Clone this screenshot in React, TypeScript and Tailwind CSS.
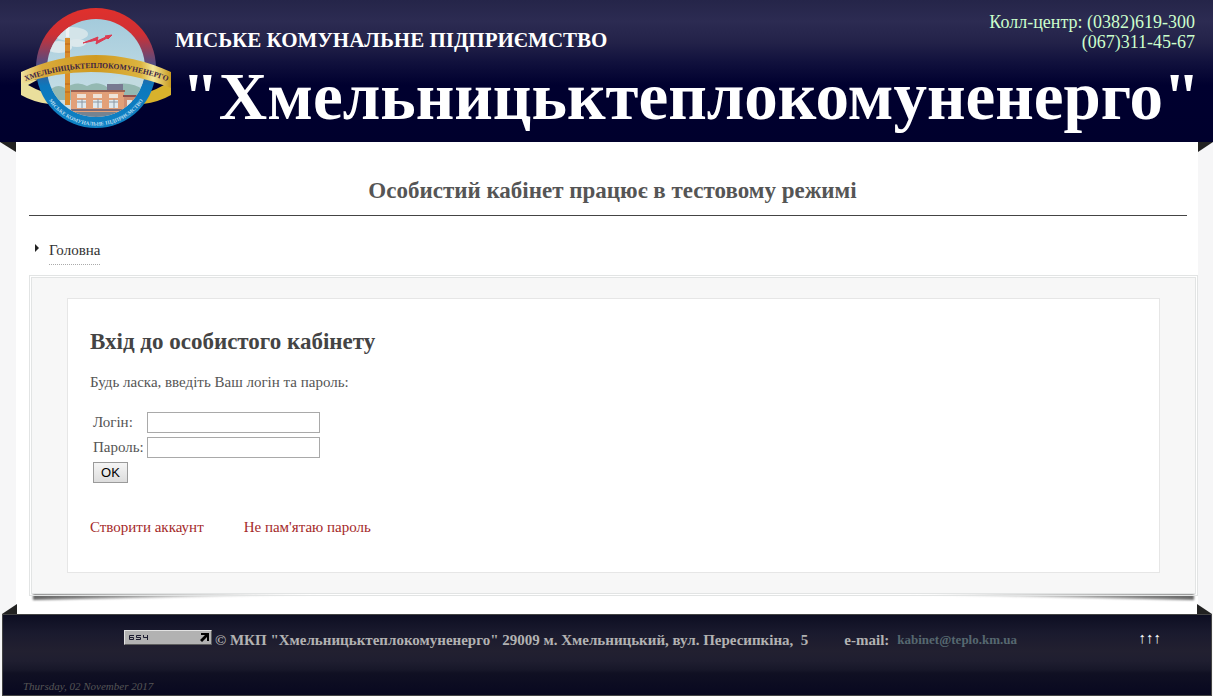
function Logo() {
  return (
    <svg viewBox="0 0 150 121" className="h-[121px] w-[150px] shrink-0" role="img" aria-label="Хмельницьктеплокомуненерго">
      <defs>
        <linearGradient id="ring" x1="0" y1="0" x2="0" y2="1">
          <stop offset="0" stopColor="#e0302c" />
          <stop offset="0.22" stopColor="#cf3034" />
          <stop offset="0.45" stopColor="#5b4a7c" />
          <stop offset="0.65" stopColor="#0c78bd" />
          <stop offset="1" stopColor="#0f82c4" />
        </linearGradient>
        <linearGradient id="sky" x1="0" y1="0" x2="0" y2="1">
          <stop offset="0" stopColor="#a4cbdc" />
          <stop offset="1" stopColor="#cfe3e8" />
        </linearGradient>
        <linearGradient id="band" x1="0" y1="0" x2="1" y2="0">
          <stop offset="0" stopColor="#f0e3a0" />
          <stop offset="0.14" stopColor="#d9a93a" />
          <stop offset="0.5" stopColor="#d09a20" />
          <stop offset="0.8" stopColor="#dcb440" />
          <stop offset="0.88" stopColor="#f3e79a" />
          <stop offset="1" stopColor="#c99a1f" />
        </linearGradient>
        <clipPath id="inner">
          <circle cx="75" cy="60" r="49" />
        </clipPath>
      </defs>
      <path d="M0 74 L0 87 Q12 94 28 96 L22 84 Q14 81 7 77 L18 71 Z" fill="#eadf9c" />
      <path d="M150 76 L150 87 Q138 94 122 96 L128 84 Q136 81 143 77 L132 71 Z" fill="#d8b22c" />
      <circle cx="75" cy="60" r="60" fill="url(#ring)" />
      <circle cx="75" cy="60" r="49" fill="url(#sky)" />
      <g clipPath="url(#inner)">
        <ellipse cx="50" cy="26" rx="17" ry="7" fill="#d3e4e9" />
        <ellipse cx="38" cy="39" rx="13" ry="6" fill="#dbe8ec" />
        <ellipse cx="56" cy="35" rx="9" ry="4" fill="#dbe8ec" />
        <ellipse cx="106" cy="74" rx="19" ry="6" fill="#c2dbe0" />
        <path d="M26 86 Q34 74 44 80 Q56 72 66 78 Q76 72 86 79 Q108 70 126 84 L126 92 L26 92 Z" fill="#94b9b2" />
        <rect x="86" y="76" width="16" height="6" fill="#787a91" />
        <rect x="50" y="84" width="53" height="22" fill="#e2a078" />
        <rect x="50" y="82" width="54" height="2" fill="#9a6152" />
        <rect x="103" y="88" width="16" height="17" fill="#cf8d70" />
        <rect x="102" y="87" width="18" height="2" fill="#904f4b" />
        {[56, 72, 88].map((x) => (
          <g key={x}>
            <rect x={x} y="86" width="9" height="4" fill="#efe4d8" />
            <rect x={x} y="92" width="9" height="8" fill="#dfe9ee" />
            <path d={`M${x} 94 H${x + 9} M${x + 5} 91 V100`} stroke="#8a98a4" strokeWidth="1" />
          </g>
        ))}
        <rect x="106" y="92" width="5" height="7" fill="#dfe3e5" />
        <rect x="20" y="104" width="110" height="10" fill="#758391" />
        <path d="M50 102 H118" stroke="#7b6c78" strokeWidth="2" />
        <rect x="44" y="30" width="5" height="67" fill="#d98c2b" />
        <path d="M44 36 h5 M44 44 h5 M44 76 h5 M44 84 h5" stroke="#b9631e" strokeWidth="1" />
        <path d="M45 29 Q44 18 48 11 Q49 20 48 29 Z" fill="#eef2f4" />
      </g>
      <path d="M62 35 L77 29 L76 33 L85 29 L84 28 L91 27 L87 31 L86 30 L75 36 L76 32 Z" fill="#dc3b52" stroke="#dc3b52" strokeWidth="1" />
      <path d="M0 64 Q75 30 150 64 L150 80 Q75 50 0 76 Z" fill="url(#band)" />
      <path id="bandText" d="M2 74 Q75 46 149 74" fill="none" />
      <text className="[font-family:'Liberation_Serif',serif] font-bold" fontSize="7.6" fill="#3b2345" textAnchor="middle">
        <textPath href="#bandText" startOffset="50%">
          ХМЕЛЬНИЦЬКТЕПЛОКОМУНЕНЕРГО
        </textPath>
      </text>
      <path id="ringText" d="M23 84 A57 57 0 0 0 127 84" fill="none" />
      <text className="[font-family:'Liberation_Serif',serif] font-bold" fontSize="5.4" fill="#b9dcf0" textAnchor="middle">
        <textPath href="#ringText" startOffset="50%">
          МІСЬКЕ КОМУНАЛЬНЕ ПІДПРИЄМСТВО
        </textPath>
      </text>
    </svg>
  );
}

function Counter() {
  return (
    <svg viewBox="0 0 88 15" className="h-[15px] w-[88px] shrink-0" role="img" aria-label="654">
      <rect width="88" height="15" fill="#5d5d5d" />
      <path d="M0 0 H88 L87 1 H1 V14 L0 15 Z" fill="#e2e2e2" />
      <rect x="1" y="1" width="86" height="13" fill="#b2b2b2" />
      <path
        d="M10 5.500 H5.500 V9.500 H9.500 V7.500 H6 M17 5.500 H12.500 V7.500 H16.500 V9.500 H12 M19.500 5 V7.500 H23.500 M23.500 5 V10"
        fill="none"
        stroke="#1c1c30"
        strokeWidth="1"
      />
      <path d="M77 3 H85 V11 H83 V7 L78 12 L76 10 L81 5 H77 Z" fill="#000" />
    </svg>
  );
}

function Header() {
  return (
    <header className="flex h-[142px] bg-[linear-gradient(#252549_0px,#2c2b52_21px,#232249_42px,#11113d_62px,#00002f_85px,#00002d_142px)] pt-2 pl-[21px]">
      <Logo />
      <div className="min-w-0 flex-1 pl-1">
        <div className="flex justify-between pr-[18px]">
          <h2 className="pt-5 text-[21px] leading-6 font-bold text-white">МІСЬКЕ КОМУНАЛЬНЕ ПІДПРИЄМСТВО</h2>
          <p className="pt-1 text-right text-[18px] leading-5 text-[#ccffcc]">
            Колл-центр: (0382)619-300
            <br />
            (067)311-45-67
          </p>
        </div>
        <h1 className="pr-[6px] text-center text-[67px] leading-[88px] font-bold whitespace-nowrap text-white">
          "Хмельницьктеплокомуненерго"
        </h1>
      </div>
    </header>
  );
}

function LoginForm() {
  return (
    <section className="mx-[35px] my-5 border border-[#e6e6e6] bg-white px-[22px] pt-[29px] pb-[35px]">
      <h2 className="text-[23px] leading-7 font-bold text-[#444]">Вхід до особистого кабінету</h2>
      <p className="mt-4 text-[15px] leading-5">Будь ласка, введіть Ваш логін та пароль:</p>
      <form className="mt-5" onSubmit={(e) => e.preventDefault()}>
        <div className="ml-[3px] grid grid-cols-[50px_173px] items-start gap-x-1 gap-y-1">
          <label htmlFor="login" className="text-[15px] leading-5">
            Логін:
          </label>
          <input id="login" type="text" className="h-[21px] border border-[#a9a9a9] bg-white px-1 text-[13px]" />
          <label htmlFor="password" className="text-[15px] leading-5">
            Пароль:
          </label>
          <input id="password" type="password" className="h-[21px] border border-[#a9a9a9] bg-white px-1 text-[13px]" />
          <button
            type="submit"
            className="h-[21px] w-[35px] border border-[#9a9a9a] bg-linear-to-b from-[#f5f5f5] to-[#dddddd] font-['Liberation_Sans',sans-serif] text-[13px] leading-[18px] text-black"
          >
            OK
          </button>
        </div>
      </form>
      <p className="mt-[34px] flex gap-10 text-[15px] leading-5 text-[#a52a2a]">
        <a href="#register">Створити аккаунт</a>
        <a href="#forgot">Не пам'ятаю пароль</a>
      </p>
    </section>
  );
}

function Footer() {
  return (
    <footer className="mr-px ml-[2px] border border-[#444] bg-[linear-gradient(#0d0e22_0px,#1a1a2e_18px,#222030_36px,#1f1e30_46px,#171729_55px,#101023_58px,#080820_80px)]">
      <div className="flex h-14 items-start pt-[15px] pr-[50px] pl-[121px] text-[15px] leading-5 font-bold whitespace-nowrap text-[#b2b2b2]">
        <Counter />
        <span className="ml-[3px]">© МКП "Хмельницьктеплокомуненерго" 29009 м. Хмельницький, вул. Пересипкіна,&nbsp; 5</span>
        <span className="ml-9">e-mail:</span>
        <a href="mailto:kabinet@teplo.km.ua" className="ml-2 text-[13px] text-[#566870]">
          kabinet@teplo.km.ua
        </a>
        <a href="#top" className="ml-auto text-[15px] leading-4 font-normal text-white">
          ↑↑↑
        </a>
      </div>
      <p className="pt-[7px] pb-px pl-5 text-[11px] leading-4 text-[#555] italic">Thursday, 02 November 2017</p>
    </footer>
  );
}

export default function App() {
  return (
    <div id="top" className="min-h-screen bg-[#f6f6f7] [font-family:'Liberation_Serif',serif] text-[#555]">
      <Header />
      <main className="relative mr-[15px] ml-4 bg-white pt-[34px] pb-[18px]">
        {/* folded corners */}
        <div className="absolute top-0 -left-4 h-[10px] w-4 bg-[#222] [clip-path:polygon(0_0,100%_0,100%_100%)]" />
        <div className="absolute top-0 -right-[15px] h-[10px] w-[15px] bg-[#222] [clip-path:polygon(0_0,100%_0,0_100%)]" />
        <div className="absolute bottom-0 -left-[14px] h-[10px] w-[15px] bg-[#222] [clip-path:polygon(100%_0,100%_100%,0_100%)]" />
        <div className="absolute -right-[14px] bottom-0 h-[10px] w-[15px] bg-[#222] [clip-path:polygon(0_0,100%_100%,0_100%)]" />

        <div className="mr-[11px] ml-[13px] border-b border-[#444] pb-[9px] pl-[9px] text-center">
          <h2 className="text-[23px] leading-[30px] font-bold">Особистий кабінет працює в тестовому режимі</h2>
        </div>
        <nav className="mt-6 ml-[18px] flex">
          <svg viewBox="0 0 5 8" className="mt-1 mr-[10px] h-2 w-[5px]" aria-hidden="true">
            <path d="M1 0 L5 4 L1 8 Z" fill="#222" />
          </svg>
          <a href="#home" className="border-b border-dotted border-[#aaa] pb-1 text-[15px] leading-5 text-[#333]">
            Головна
          </a>
        </nav>
        <div className="relative mt-[10px] ml-[13px]">
          {/* lifted-corner shadows */}
          <div className="absolute -bottom-1 left-1 h-[6px] w-1/4 blur-[1px]">
            <div className="h-full bg-linear-to-r from-[#666] to-transparent [clip-path:polygon(0_0,100%_0,0_100%)]" />
          </div>
          <div className="absolute right-1 -bottom-1 h-[6px] w-1/4 blur-[1px]">
            <div className="h-full bg-linear-to-l from-[#666] to-transparent [clip-path:polygon(0_0,100%_0,100%_100%)]" />
          </div>
          <div className="relative border-[3px] border-double border-[#e2e4e4] bg-[#f7f7f7] bg-clip-padding">
            <LoginForm />
          </div>
        </div>
      </main>
      <Footer />
    </div>
  );
}
